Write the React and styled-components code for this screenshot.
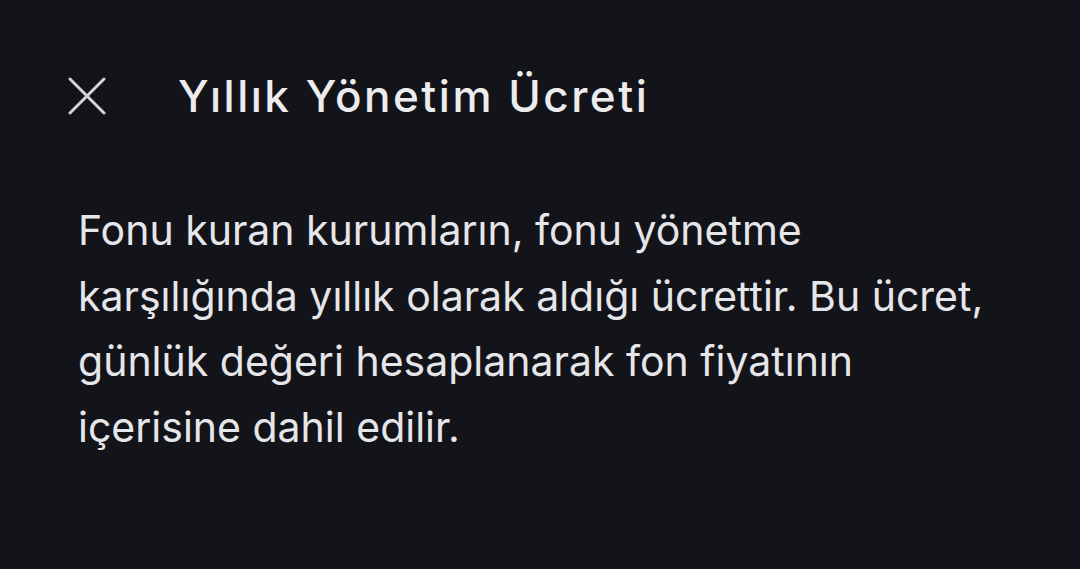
import styled, { createGlobalStyle } from 'styled-components';

const GlobalStyle = createGlobalStyle`
	html, body {
		margin: 0;
		padding: 0;
		background: #131419;
	}
	* {
		box-sizing: border-box;
	}
`;

const Sheet = styled.div`
	width: 1080px;
	height: 569px;
	background: #131419;
	font-family: Inter, 'Noto Sans', sans-serif;
	padding: 76px 60px 0 68px;
	overflow: hidden;
`;

const Header = styled.div`
	display: flex;
	align-items: center;
	gap: 72px;
	height: 40px;
`;

const CloseButton = styled.button`
	display: flex;
	align-items: center;
	justify-content: center;
	width: 38px;
	height: 38px;
	padding: 0;
	border: none;
	background: none;
	cursor: pointer;
	svg {
		stroke: #d4d4d8;
	}
`;

const Title = styled.h1`
	margin: 0;
	font-size: 44px;
	font-weight: 500;
	color: #ececef;
	letter-spacing: 2.5px;
	line-height: 1;
`;

const Body = styled.p`
	margin: 82px 0 0 10px;
	font-size: 41px;
	line-height: 65.5px;
	font-weight: 400;
	color: #e6e6ea;
	max-width: 935px;
`;

const App = () => {
	return (
		<>
			<GlobalStyle />
			<Sheet>
				<Header>
					<CloseButton aria-label="Kapat">
						<svg width="38" height="38" viewBox="0 0 38 38" fill="none" strokeWidth="3" strokeLinecap="round">
							<path d="M2 2L36 36" />
							<path d="M36 2L2 36" />
						</svg>
					</CloseButton>
					<Title>Yıllık Yönetim Ücreti</Title>
				</Header>
				<Body>
					Fonu kuran kurumların, fonu yönetme karşılığında yıllık olarak aldığı ücrettir. Bu ücret, günlük değeri
					hesaplanarak fon fiyatının içerisine dahil edilir.
				</Body>
			</Sheet>
		</>
	);
};

export default App;
